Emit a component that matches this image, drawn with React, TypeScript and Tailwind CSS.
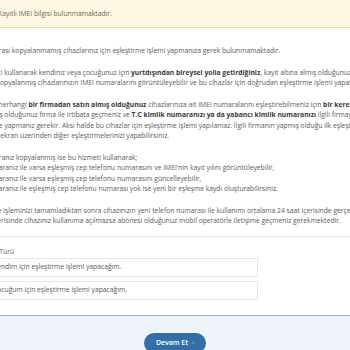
import React from "react";

const B = ({ children }: { children: React.ReactNode }) => (
  <b className="font-bold text-[#3a3a3a]">{children}</b>
);

const Line = ({ children, className = "" }: { children: React.ReactNode; className?: string }) => (
  <div className={`whitespace-nowrap ${className}`}>{children}</div>
);

export default function App() {
  return (
    <div
      className="w-[350px] h-[350px] overflow-hidden bg-white text-[#5a5a5a] text-[6.75px] leading-[10.5px]"
      style={{ fontFamily: '"Open Sans", "Noto Sans", sans-serif' }}
    >
      <div className="w-[580px] ml-[-35px]">
        <div className="h-[28px] bg-[#fcf8e3] border-b border-[#f3dfa2] flex items-center pl-[33px] pt-[2px] text-[#6a6558] whitespace-nowrap">
          Kayıtlı IMEI bilgisi bulunmamaktadır.
        </div>

        <div className="pt-[18px] flex flex-col gap-[11px]">
          <div>
            <Line>IMEI numarası kopyalanmamış cihazlarınız için eşleştirme işlemi yapmanıza gerek bulunmamaktadır.</Line>
          </div>
          <div>
            <Line className="ml-[4px]">
              Bu hizmeti kullanarak kendiniz veya çocuğunuz için <B>yurtdışından bireysel yolla getirdiğiniz</B>, kayıt altına almış olduğunuz ve IMEI
            </Line>
            <Line>numarası kopyalanmış cihazlarınızın IMEI numaralarını görüntüleyebilir ve bu cihazlar için doğrudan eşleştirme işlemi yapabilirsiniz.</Line>
          </div>
          <div>
            <Line>
              Yurtiçinde herhangi <B>bir firmadan satın almış olduğunuz</B> cihazlarınıza ait IMEI numaralarını eşleştirebilmeniz için <B>bir kereliğine</B> cihazı
            </Line>
            <Line className="ml-[4px]">
              satın almış olduğunuz firma ile irtibata geçmeniz ve <B>T.C kimlik numaranızı ya da yabancı kimlik numaranızı</B> ilgili firmaya bildirerek
            </Line>
            <Line className="ml-[5px]">eşleştirme yapmanız gerekir. Aksi halde bu cihazlar için eşleştirme işlemi yapılamaz. İlgili firmanın yapmış olduğu ilk eşleştirmenin</Line>
            <Line className="ml-[5px]">ardından ekran üzerinden diğer eşleştirmelerinizi yapabilirsiniz.</Line>
          </div>
          <div>
            <Line>IMEI numaranız kopyalanmış ise bu hizmeti kullanarak;</Line>
            <Line>- IMEI numaranız ile varsa eşleşmiş cep telefonu numarasını ve IMEI'nin kayıt yılını görüntüleyebilir,</Line>
            <Line>- IMEI numaranız ile varsa eşleşmiş cep telefonu numarasını güncelleyebilir,</Line>
            <Line>- IMEI numaranız ile eşleşmiş cep telefonu numarası yok ise yeni bir eşleşme kaydı oluşturabilirsiniz.</Line>
          </div>
          <div>
            <Line className="ml-[4px]">Eşleştirme işleminizi tamamladıktan sonra cihazınızın yeni telefon numarası ile kullanımı ortalama 24 saat içerisinde gerçekleşecektir.</Line>
            <Line className="ml-[3px]">24 saat içerisinde cihazınız kullanıma açılmazsa abonesi olduğunuz mobil operatörle iletişime geçmeniz gerekmektedir.</Line>
          </div>
        </div>

        <div className="mt-[9px] border-t border-[#ececec] pt-[10px] pb-[15px]">
          <div className="whitespace-nowrap mb-[1px]">Eşleştirme Türü</div>
          <div className="flex flex-col gap-[4px] w-[293px]">
            <div className="h-[19px] border border-[#e6e6e6] bg-white flex items-center pl-[10px] whitespace-nowrap">
              <span className="w-[9px] h-[9px] rounded-full border border-[#bbb] mr-[8px] shrink-0" />
              Kendim için eşleştirme işlemi yapacağım.
            </div>
            <div className="h-[19px] border border-[#e6e6e6] bg-white flex items-center pl-[10px] whitespace-nowrap">
              <span className="w-[9px] h-[9px] rounded-full border border-[#bbb] mr-[8px] shrink-0" />
              Çocuğum için eşleştirme işlemi yapacağım.
            </div>
          </div>
        </div>
      </div>

      <div className="border-t border-[#8fb0d0] bg-[#eef3f9] h-[40px] pt-[17px] flex justify-center">
        <button className="h-[20px] px-[12px] rounded-full bg-[#336ea8] text-white text-[7px] font-semibold flex items-center gap-[4px]">
          Devam Et
          <span className="text-[#9fc0e0] font-normal">›</span>
        </button>
      </div>
    </div>
  );
}
